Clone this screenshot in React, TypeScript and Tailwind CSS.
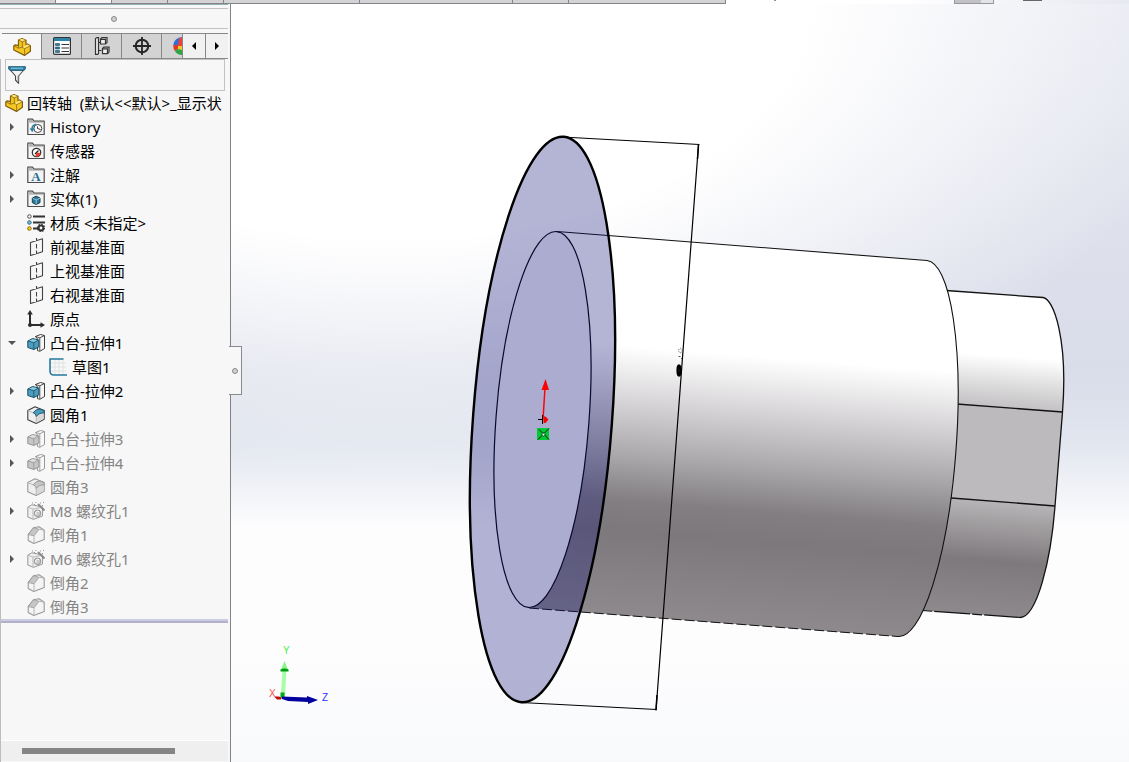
import { useState } from "react";
import type { ReactNode } from "react";

type IconName =
  | "part"
  | "history"
  | "sensor"
  | "note"
  | "solid"
  | "material"
  | "plane"
  | "origin"
  | "extrude"
  | "sketch"
  | "fillet"
  | "hole"
  | "chamfer";

interface TreeItem {
  label: string;
  icon: IconName;
  expand?: "open" | "closed";
  child?: boolean;
  muted?: boolean;
}

const TREE: TreeItem[] = [
  { label: "History", icon: "history", expand: "closed" },
  { label: "传感器", icon: "sensor" },
  { label: "注解", icon: "note", expand: "closed" },
  { label: "实体(1)", icon: "solid", expand: "closed" },
  { label: "材质 <未指定>", icon: "material" },
  { label: "前视基准面", icon: "plane" },
  { label: "上视基准面", icon: "plane" },
  { label: "右视基准面", icon: "plane" },
  { label: "原点", icon: "origin" },
  { label: "凸台-拉伸1", icon: "extrude", expand: "open" },
  { label: "草图1", icon: "sketch", child: true },
  { label: "凸台-拉伸2", icon: "extrude", expand: "closed" },
  { label: "圆角1", icon: "fillet" },
  { label: "凸台-拉伸3", icon: "extrude", expand: "closed", muted: true },
  { label: "凸台-拉伸4", icon: "extrude", expand: "closed", muted: true },
  { label: "圆角3", icon: "fillet", muted: true },
  { label: "M8 螺纹孔1", icon: "hole", expand: "closed", muted: true },
  { label: "倒角1", icon: "chamfer", muted: true },
  { label: "M6 螺纹孔1", icon: "hole", expand: "closed", muted: true },
  { label: "倒角2", icon: "chamfer", muted: true },
  { label: "倒角3", icon: "chamfer", muted: true },
];

function PartIcon() {
  return (
    <svg viewBox="0 0 18 18" className="size-[18px] shrink-0" strokeLinejoin="round">
      <path d="M5.500 2 9 .6l4 1.600v4.300l1.500-.5 2.900 1.700v5.600L11.500 17.400.8 12V7.800l1.700-1 3 .8z" fill="#f5c722" stroke="#805d0d" strokeWidth="1.200" />
      <path d="M5.500 2 9 .8l3.800 1.500-3.500 1.500zM9.500 9.200l5-2.800 2.500 1.400-5.300 3z" fill="#ffe67a" />
      <path d="M9.300 3.900v5.300l2.300 1.500v6.500M5.500 2l3.800 1.900L13 2.200M11.600 10.700l5.600-2.900M1 7.900l4.500 2.300 4-1M5.500 7v3.200" fill="none" stroke="#8d690f" strokeWidth=".8" />
    </svg>
  );
}

function Folder({ children }: { children: ReactNode }) {
  return (
    <>
      <path d="M.8 16.500V1.200H5.500l1.500 2h10.200v13.300z" fill="#f4f4f4" stroke="#4c4c4c" strokeWidth="1.200" />
      <path d="M1.400 1.800h3.800l1.400 2H17v1H1.400z" fill="#b5b5b5" />
      {children}
    </>
  );
}

function TreeIcon({ name, muted }: { name: IconName; muted?: boolean }) {
  const line = muted ? "#999" : "#3d3d3d";
  const fill = muted ? "#c6c6c6" : "#4d9dbd";
  const dark = muted ? "#949494" : "#174e68";
  return (
    <svg viewBox="0 0 18 18" className="size-[18px] shrink-0" strokeLinejoin="round">
      {name === "history" && (
        <Folder>
          <circle cx="10.800" cy="10.500" r="4" fill="#fff" stroke="#444" />
          <path d="M10.500 8.500v2l3 1" fill="none" stroke="#333" />
          <path d="M5 12a5.500 5.500 0 0 1 4-5.800" fill="none" stroke="#2d7fa5" strokeWidth="1.600" />
          <path d="m2.600 10.600 5-.4-2.300 4z" fill="#2d7fa5" />
        </Folder>
      )}
      {name === "sensor" && (
        <Folder>
          <circle cx="9.500" cy="10.500" r="4.200" fill="#fff" stroke="#333" strokeWidth="1.300" />
          <path d="M9.500 10.800h4a4 4 0 0 1-5 3.800z" fill="#ee3d25" />
          <path d="m8 12 3.500-3.500" stroke="#222" strokeWidth="1.200" />
        </Folder>
      )}
      {name === "note" && (
        <Folder>
          <text x="9" y="15" textAnchor="middle" fontSize="13" fontWeight="bold" fontFamily="Liberation Serif, serif" fill="#276f94">A</text>
        </Folder>
      )}
      {name === "solid" && (
        <Folder>
          <path d="m9.200 6.200 3.800 1.800v4.600l-3.800 2-3.900-2V8z" fill="#2a779a" stroke="#173e50" />
          <path d="m5.500 8.200 3.700 1.700L13 8.200M9.200 9.900v4.500" fill="none" stroke="#a7d5e5" strokeWidth=".8" />
        </Folder>
      )}
      {name === "material" && (
        <>
          <path d="M6 2.500h12M6 8.500h12M6 14.500h5" stroke="#333" strokeWidth="1.800" />
          <circle cx="2.400" cy="2.500" r="1.800" fill="#eee" stroke="#555" />
          <circle cx="2.400" cy="8.500" r="1.800" fill="#6bbbd7" stroke="#356e83" />
          <circle cx="2.400" cy="14.500" r="1.800" fill="#ffc815" stroke="#8c6e0e" />
          <circle cx="14" cy="14" r="2.400" fill="none" stroke="#333" strokeWidth="2" />
          <circle cx="14" cy="14" r="3.600" fill="none" stroke="#333" strokeWidth="1.200" strokeDasharray="1.400 1.400" />
        </>
      )}
      {name === "plane" && (
        <path d="M3.500 4.500 15.500.8v13l-12 3.700zM9.500 0v4M9.500 6v4.500M9.500 12.500V17" fill="none" stroke="#444" strokeWidth="1.100" />
      )}
      {name === "origin" && (
        <>
          <path d="M3 3v12h12" fill="none" stroke="#2d2d2d" strokeWidth="2" />
          <path d="m3 0 2.800 4.500H.2zM18 15l-4.500-2.800v5.600z" fill="#2d2d2d" />
          <circle cx="3" cy="15" r="2" fill="#2d2d2d" />
        </>
      )}
      {name === "extrude" && (
        <>
          <path d="m8.500 2.500 5-2L17.500 1.500v13L12.800 17.300l-2.300-.8V5z" fill="#f8f8f8" stroke={line} strokeWidth="1" />
          <path d="m8.500 2.500 4.300 1.300v13M12.800 3.800l4.700-2.300" fill="none" stroke={line} strokeWidth=".9" />
          <path d="m.8 7 4.700-2.500 6.300 1.500v7L6.800 15.500.8 13.500z" fill={fill} stroke={dark} />
          <path d="m1.500 7.200 4-2.100 5.300 1.200-4 2.200z" fill={muted ? "#dedede" : "#86c5db"} />
          <path d="m.8 7 6 1.700v6.800M6.800 8.700l5-2.700" fill="none" stroke={dark} strokeWidth=".8" />
        </>
      )}
      {name === "sketch" && (
        <>
          <path d="M6 1v15M10 1v15M14 1v15M2 5h15M2 9h15M2 13h15" stroke="#dfe2e4" />
          <path d="M14.500 1H1v12q0 4 4 4h13" fill="none" stroke="#26799d" strokeWidth="1.600" />
        </>
      )}
      {name === "fillet" && (
        <>
          <path d="M.8 4.500 8 .8l9.200 3.700v8.700L9.200 17.400.8 13.800z" fill="#efefef" stroke={line} strokeWidth="1.100" />
          <path d="M9.200 10v7l7.400-4V6z" fill="#d8d8d8" />
          <path d="M.8 4.500 6.600 7M9.200 10v7.400" fill="none" stroke="#b5b5b5" />
          <path d="M6.200 6.700Q9 2.800 13 3l4.200 1.700v2.200Q12 6.600 9.300 10.400 9 7.700 6.200 6.700z" fill={fill} stroke={dark} strokeWidth=".9" />
        </>
      )}
      {name === "hole" && (
        <>
          <path d="m.8 5.200 4-2.400L15.500 5v9L6.500 17.400.8 15z" fill="#f0f0f0" stroke={line} />
          <path d="m.8 5.200 5.200 1.900v10M6 7.100l9.500-2" fill="none" stroke="#b9b9b9" />
          <circle cx="10.500" cy="11.300" r="3.300" fill="#c8c8c8" stroke={dark} />
          <path d="M9.300 12.800a2 2 0 0 1 2.800-3" fill="none" stroke="#fff" />
          <path d="m11 2 6.500 6.500" stroke="#8b8b8b" strokeWidth="2" />
          <path d="M5 1h1M8.500.5h1M13 1h1M16 .5h1M15 3.500h1M7 2.500h1" stroke="#999" />
        </>
      )}
      {name === "chamfer" && (
        <>
          <path d="M1.200 8.500 6.500 1.800 12 .8l5.200 3.500v9.200L6.800 17.400l-5.600-3z" fill="#f4f4f4" stroke={line} strokeWidth="1.100" />
          <path d="M1.200 8.500 6.500 1.800 12 3.200 7 9.800z" fill={fill} stroke="#999" strokeWidth=".8" />
          <path d="M7 9.800v7.400M12 3.200l5 1" fill="none" stroke="#b8b8b8" />
        </>
      )}
    </svg>
  );
}

function TopStrip() {
  return (
    <div className="flex h-1 shrink-0 bg-linear-to-r from-white from-80% to-[#e7e9f0]">
      <div className="flex w-[726px] shrink-0 divide-x divide-[#858589] border-r border-b border-[#858589] bg-[#d3d3d5]">
        <div className="w-14" />
        <div className="w-14 bg-[#f7f7f7]" />
        <div className="w-14" />
        <div className="w-14" />
        <div className="w-[136px]" />
        <div className="w-[153px]" />
        <div className="w-14" />
        <div className="flex-1" />
      </div>
      <div className="ml-12 h-px w-[2px] bg-[#7899ae]" />
      <div className="ml-[178px] flex w-10 border-x border-b border-[#98989c] bg-[#c1c1c6]">
        <div className="ml-auto w-3 bg-[#e4e4e7]" />
      </div>
      <div className="ml-[29px] h-px w-[19px] bg-[#66666a]" />
    </div>
  );
}

const TAB = "flex w-10 items-center justify-center border-t border-r border-b border-[#88888a] bg-[#d3d3d3]";

function PanelTabs() {
  return (
    <div className="flex h-[26px] pl-[2px]">
      <button aria-label="特征树" className="flex w-10 items-center justify-center border-t border-r border-[#88888a] bg-[#f7f7f7]">
        <PartIcon />
      </button>
      <button aria-label="属性" className={TAB}>
        <svg viewBox="0 0 18 18" className="size-[18px]">
          <rect x=".6" y=".6" width="16.800" height="16.800" rx="1" fill="#fff" stroke="#333" strokeWidth="1.200" />
          <path d="M1 1h16v3H1z" fill="#2d83a8" />
          <path d="M2.500 6.500h4v2h-4zM2.500 10h4v2h-4zM2.500 13.500h4v2h-4z" fill="#2d83a8" stroke="#1a4558" strokeWidth=".6" />
          <path d="M8.500 7.500H16M8.500 11H16M8.500 14.500H16" stroke="#333" strokeWidth="1.200" />
        </svg>
      </button>
      <button aria-label="配置" className={TAB}>
        <svg viewBox="0 0 18 18" className="size-[18px]" fill="none" stroke="#333" strokeWidth="1.200">
          <path d="M2.500 1.500 4 .6h1.500v16l-1 .8h-2zM5.500 5.500h3M5.500 13.500h3" fill="#eee" />
          <path d="m7.500 2 1.500-1.400h5v5L12.500 7h-5zM9.500 11.500l1.500-1.400h5v5l-1.500 1.500h-5z" fill="#eee" />
          <path d="M7.500 2.300h5V7M9.500 11.800h5v5" />
        </svg>
      </button>
      <button aria-label="尺寸" className={TAB}>
        <svg viewBox="0 0 18 18" className="size-[18px]" fill="none" stroke="#252525">
          <circle cx="9" cy="9" r="6.300" strokeWidth="2" />
          <path d="M9 0v18M0 9h18" strokeWidth="1.800" />
        </svg>
      </button>
      <button aria-label="外观" className="flex flex-1 items-center justify-end overflow-hidden border-y border-[#88888a] bg-[#d3d3d3]">
        <svg viewBox="0 0 9 18" className="h-[18px] w-[9px]">
          <path d="M9 0A9 9 0 0 0 .3 8L9 9z" fill="#2f6fd6" />
          <path d="M.3 8a9 9 0 0 0 1.500 6L5 12V8z" fill="#dd3a2a" />
          <path d="M1.800 14A9 9 0 0 0 9 18v-6H5z" fill="#2ea545" />
          <path d="M6 1.500 9 .2V9H5z" fill="#ef3f36" />
          <path d="M5 9h4v4l-4-1z" fill="#f3c724" />
        </svg>
      </button>
      <button aria-label="上一个" className="flex w-6 items-center justify-center border border-[#88888a] bg-[#f1f1f1]">
        <svg viewBox="0 0 4 8" className="h-2 w-1"><path d="M4 0v8L0 4z" /></svg>
      </button>
      <button aria-label="下一个" className="flex w-[22px] items-center justify-center border-y border-[#88888a] bg-[#f1f1f1]">
        <svg viewBox="0 0 4 8" className="h-2 w-1"><path d="M0 0v8l4-4z" /></svg>
      </button>
    </div>
  );
}

function FeatureTree() {
  const [selected, setSelected] = useState<number | null>(null);

  return (
    <ul>
      <li className="flex h-6 items-center gap-1 overflow-hidden pl-1 whitespace-pre">
        <PartIcon />
        <span>回转轴  (默认&lt;&lt;默认&gt;_显示状</span>
      </li>
      {TREE.map((item, index) => (
        <li key={index} className={item.child ? "flex h-6 items-center pl-[22px]" : "flex h-6 items-center"}>
          <span className="flex w-[26px] shrink-0 pl-[7px]">
            {item.expand && (
              <button aria-label={item.label} aria-expanded={item.expand === "open"}>
                <svg viewBox="0 0 8 8" className="size-2" fill="#555">
                  {item.expand === "open" ? <path d="M0 2h8L4 6z" /> : <path d="M2 0v8l4-4z" />}
                </svg>
              </button>
            )}
          </span>
          <button
            onClick={() => setSelected(index)}
            className={`flex items-center gap-[5px] whitespace-nowrap ${item.muted ? "text-[#858585]" : ""} ${selected === index ? "bg-[#cce4f7]" : ""}`}
          >
            <TreeIcon name={item.icon} muted={item.muted} />
            {item.label}
          </button>
        </li>
      ))}
    </ul>
  );
}

function SidePanel() {
  return (
    <aside className="flex w-[231px] shrink-0 flex-col border-r border-[#828286] bg-[#f7f7f7] pr-[2px]">
      <div className="h-1 border-t border-[#8fb0b8]" />
      <div className="flex h-[21px] items-center justify-center border-y border-[#c2c2c2]">
        <span className="size-[6px] rounded-full border border-[#8a8a8a] bg-[#d0d0d0]" />
      </div>
      <div className="flex flex-1 flex-col pt-1">
        <PanelTabs />
        <div className="flex flex-1 flex-col border-l border-[#bdbdbd]">
          <label className="mr-[3px] ml-1 flex h-8 items-center border border-[#c2c2c2] pl-[2px]">
            <svg viewBox="0 0 18 18" className="size-[18px] shrink-0">
              <path d="M1 2.500h16L10.600 10v7.300L7.500 14V10z" fill="#f3f3f3" stroke="#444" strokeWidth="1.100" strokeLinejoin="round" />
              <path d="M9.500 10v6l1-.2V10L15 5z" fill="#999" />
              <path d="M.6.6h16.800v2.200L16 4.500H2L.6 2.800z" fill="#2b82a8" stroke="#1b566f" strokeWidth=".8" />
              <path d="M3 2.200h12" stroke="#8dcce1" />
            </svg>
            <input type="text" aria-label="过滤器" className="ml-1 w-full min-w-0 bg-transparent outline-none" />
          </label>
          <FeatureTree />
          <div className="h-1 border-t-2 border-[#cbcbe2] bg-[#b1b1cb]" />
          <div className="flex-1" />
          <div className="flex h-[21px] items-center border-t border-white bg-[#efefef] pl-[21px]">
            <div className="h-[6px] w-[153px] bg-[#858585]" />
          </div>
          <div className="h-px" />
        </div>
      </div>
    </aside>
  );
}

function Triad() {
  return (
    <g fontFamily="Liberation Sans, sans-serif" fontSize="10">
      <path d="m281 693 1.500-24h4l-1.500 27z" fill="#a6ffa6" />
      <path d="m284.500 661 4 10h-8z" fill="#84f784" />
      <path d="M280.500 669.500q4-2 8 0v2h-8z" fill="#009c10" />
      <path d="M280.500 692.500h4v6h-4z" fill="#00a818" />
      <path d="M274 696.500h5l2 1v2h-4z" fill="#c40808" />
      <path d="m282 696.500 25 1v-1.500l11 4-10 4v-2l-20-1-6-2z" fill="#0000a0" />
      <text x="283" y="654" fill="#48ee48">Y</text>
      <text x="269" y="697" fill="#ff4c4c">X</text>
      <text x="322" y="701" fill="#3030ff">Z</text>
    </g>
  );
}

function Model() {
  return (
    <svg viewBox="231 4 898 758" preserveAspectRatio="xMinYMin meet" className="h-full w-full" role="img" aria-label="回转轴">
      <defs>
        <linearGradient id="body" gradientUnits="userSpaceOnUse" x1="571" y1="232" x2="541.500" y2="608">
          <stop offset="0" stopColor="#fff" />
          <stop offset=".29" stopColor="#fff" />
          <stop offset=".35" stopColor="#f0eff0" />
          <stop offset=".43" stopColor="#d8d6d8" />
          <stop offset=".58" stopColor="#aaa8aa" />
          <stop offset=".7" stopColor="#827e81" />
          <stop offset=".78" stopColor="#7d787c" />
          <stop offset="1" stopColor="#8d898d" />
        </linearGradient>
        <linearGradient id="tip" gradientUnits="userSpaceOnUse" x1="1006" y1="295" x2="981" y2="615">
          <stop offset=".19" stopColor="#fff" />
          <stop offset=".36" stopColor="#bfbdbf" />
          <stop offset=".64" stopColor="#b8b6b8" />
          <stop offset=".83" stopColor="#7e797c" />
          <stop offset="1" stopColor="#8d898d" />
        </linearGradient>
      </defs>

      <path d="M946 290.500 1043 297.500C1054 299 1068 340 1062.500 412L1055 506C1051 560 1037 617 1020 617.500L922 610.500z" fill="url(#tip)" />
      <path d="M950 403.500 1062.500 412 1055 506 945 498z" fill="#bcbabd" />
      <path d="M946 290.500 1043 297.500C1054 299 1068 340 1062.500 412L1055 506C1051 560 1037 617 1020 617.500M950 403.500 1062.500 412M945 497.500 1055 506" fill="none" stroke="#111" strokeWidth="1.300" />
      <path d="M1020 617.500 922 610.500" stroke="#111" strokeWidth="1.200" strokeDasharray="36 2 10 2" />

      <path d="M557 231.500 927 260.500A43.500 188.500 4.300 0 1 898 636.500L529 608z" fill="url(#body)" />
      <path d="M557 231.500 927 260.500A43.500 188.500 4.300 0 1 898 636.500" fill="none" stroke="#111" strokeWidth="1.100" />
      <path d="M529 608 898 636.500" stroke="#111" strokeDasharray="10 3" />

      <ellipse cx="542.500" cy="419.500" rx="69.500" ry="283.500" transform="rotate(4.3 542.5 419.500)" fill="#0c0c76" fillOpacity=".31" />
      <ellipse cx="542.500" cy="419.500" rx="46.500" ry="188.500" transform="rotate(4.3 542.5 419.500)" fill="#acabd0" stroke="#080828" strokeWidth="1.200" />
      <ellipse cx="542.500" cy="419.500" rx="69.500" ry="283.500" transform="rotate(4.3 542.5 419.500)" fill="none" stroke="#000" strokeWidth="2.400" />

      <path d="m562 137 137.500 7.500M521 702.500l135.500 7M698.500 144.500l-42.500 566" fill="none" stroke="#000" strokeWidth="1.200" />
      <path d="m698.500 145-1 14M657 695l-1 15" stroke="#000" strokeWidth="1.500" />
      <ellipse cx="679" cy="370.500" rx="1.400" ry="5" fill="#555" stroke="#000" strokeWidth="2.400" />
      <ellipse cx="680.500" cy="350.500" rx="1.800" ry="2.200" fill="none" stroke="#555" strokeDasharray="1 1" />
      <path d="M678.500 356.500h2M681 358.500h1" stroke="#555" />

      <path d="m543 419.500 2-32" stroke="#f00" strokeWidth="1.400" />
      <path d="m545.500 379 3.500 11h-7.500zM543.500 416.500h2l3 3-3 3.500h-2z" fill="#f00" />
      <path d="M538 419.500h5M542.500 415v9" stroke="#000" />
      <path d="M537 428h12v12h-12z" fill="#00c933" />
      <path d="m538 439.500 11-11M539 429.500l10 10" stroke="#06240d" />
      <circle cx="543.500" cy="434.500" r="1.500" fill="#d8ffe0" stroke="#000" strokeDasharray="1 1" />

      <Triad />
    </svg>
  );
}

export default function App() {
  return (
    <div className="flex h-screen min-h-[680px] flex-col overflow-hidden bg-white font-['Noto_Sans','Noto_Sans_CJK_SC',sans-serif] text-[15px] leading-6 text-black">
      <TopStrip />
      <div className="flex min-h-0 flex-1">
        <SidePanel />
        <main className="relative min-w-0 flex-1 bg-[radial-gradient(ellipse_92%_62%_at_18%_0%,#fff_50%,transparent_100%),linear-gradient(to_bottom,#e7e9f1_0%,#d9dce9_48%,#e2e6ef_58%,#fdfdfe_69%,#fdfdfe_86%,#f8f9fb_100%)]">
          <Model />
          <button
            aria-label="折叠面板"
            className="absolute top-[342px] -left-[2px] flex h-[49px] w-[13px] items-center justify-center border-y border-r border-[#8a8a8e] bg-[#f7f7f7]"
          >
            <span className="size-[6px] rounded-full border border-[#8a8a8a] bg-[#d0d0d0]" />
          </button>
        </main>
      </div>
    </div>
  );
}
